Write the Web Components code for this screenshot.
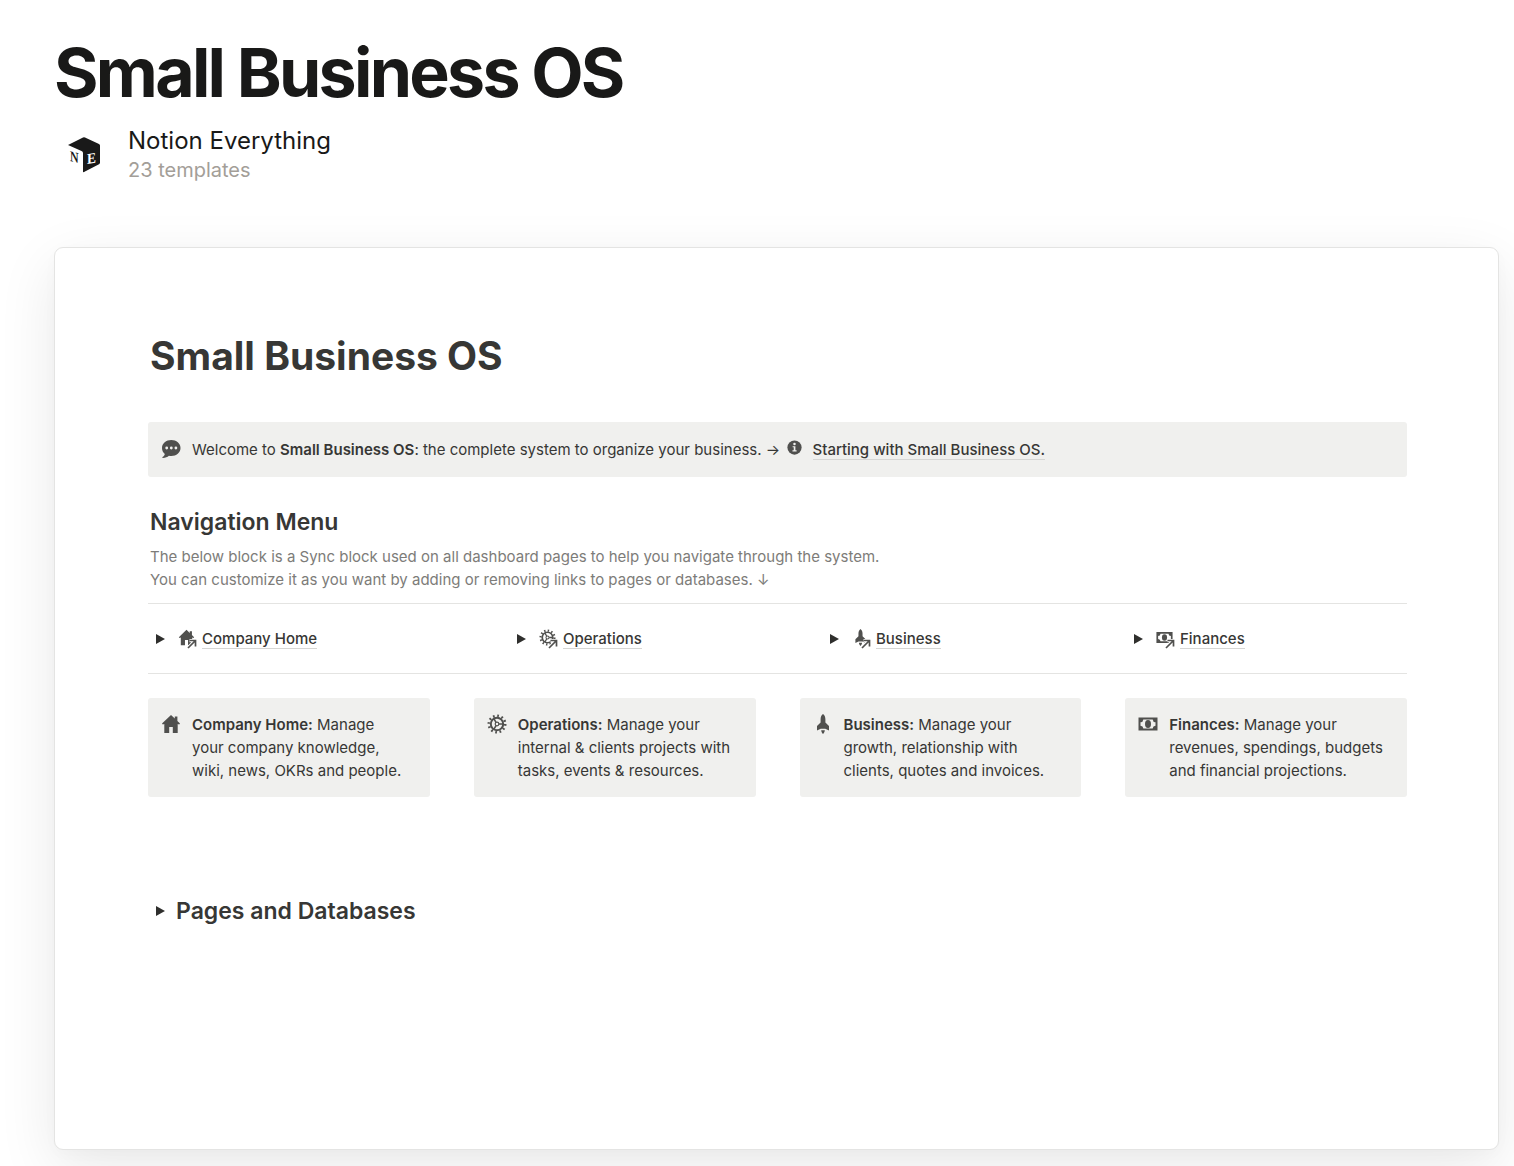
<!DOCTYPE html>
<html lang="en">
<head>
<meta charset="utf-8">
<meta name="viewport" content="width=device-width, initial-scale=1">
<title>Small Business OS</title>
<style>
  body { margin: 0; background: #fff; color: #373735; font: 15px/23px Inter, "Liberation Sans", sans-serif; }
</style>
</head>
<body>
<template-page></template-page>
<script>
const icons = {
  home: '<path d="M10 1 1 9.600l.8 1L3.300 10v9h4.900v-6h3.600v6h4.900v-9l1.500.6.8-1-2.600-2.500V2.600h-2.600v2z"/>',
  gear: '<g fill="none" stroke="currentColor"><circle cx="10" cy="10" r="6.200" stroke-width="2"/><circle cx="10" cy="10" r="8.200" stroke-width="2.600" stroke-dasharray="1.700 2.593"/><circle cx="10" cy="10" r="1.800" stroke-width="1.200"/><path stroke-width="1.500" d="M12 10h4.300M9 8.300 6.800 4.500M9 11.700l-2.200 3.800"/></g>',
  rocket: '<path d="M10 0C8.300 1.200 7.600 3.200 7.600 5.400v3L4 12v4.600l3.700-1.900h4.600l3.700 1.900V12l-3.600-3.600v-3C12.400 3.200 11.700 1.200 10 0zM8.200 16.200h3.600c0 1.500-.8 2.800-1.800 3.800-1-1-1.800-2.300-1.800-3.800z"/>',
  money: '<path fill-rule="evenodd" d="M.5 3.500h19v13H.5zM5.300 5.500A3 3 0 0 1 2.500 8.300v3.400a3 3 0 0 1 2.800 2.800h9.400a3 3 0 0 1 2.800-2.800V8.300a3 3 0 0 1-2.800-2.800z"/><ellipse cx="10" cy="10" rx="3" ry="3.900"/>',
  chat: '<path fill-rule="evenodd" d="M10.300 1C5.200 1 1 4.400 1 8.900c0 2.500 1.100 4.600 2.800 6-.3 1.300-1 2.300-2.300 3.100-.4.400-.2.900.4.900 2.500 0 4.500-.8 6-2.200.8.200 1.600.2 2.400.2 5.100 0 9.200-3.400 9.200-8S15.400 1 10.300 1zM5.700 7.600a1.400 1.400 0 1 1 0 2.800 1.400 1.400 0 0 1 0-2.800zm4.600 0a1.400 1.400 0 1 1 0 2.800 1.400 1.400 0 0 1 0-2.800zm4.600 0a1.400 1.400 0 1 1 0 2.800 1.400 1.400 0 0 1 0-2.800z"/>',
  info: '<circle cx="10" cy="10" r="9.500"/><g fill="#f0f0ee"><circle cx="10" cy="5.200" r="1.700"/><path d="M7.500 8.200h3.700v5.600h1.600v1.600H7.300v-1.600h1.700v-4H7.500z"/></g>',
  arrow: '<g fill="none"><path stroke="#fff" stroke-width="7" d="M2 18 17 3M5 3h12v12"/><path stroke="currentColor" stroke-width="3.400" d="M2 18 17 3M5 3h12v12"/></g>'
};
const define = (name, markup) => customElements.define(name, class extends HTMLElement {
  constructor() {
    super();
    this.attachShadow({ mode: 'open' }).innerHTML = typeof markup === 'function' ? markup(this) : markup;
  }
});

customElements.define('ui-icon', class extends HTMLElement {
  connectedCallback() {
    if (!this.shadowRoot) this.attachShadow({ mode: 'open' });
    this.shadowRoot.innerHTML = `<style>
      :host { display: inline-block; flex: none; width: 20px; height: 20px; color: #50504e; }
      svg { display: block; width: 100%; height: 100%; fill: currentColor; }
    </style><svg viewBox="0 0 20 20" aria-hidden="true">${icons[this.getAttribute('name')]}</svg>`;
  }
});

define('creator-line', `<style>
  :host { display: flex; align-items: center; gap: 27px; padding-left: 13px; }
  svg { flex: none; width: 34px; height: 36px; }
  a, span { display: block; }
  a { color: #191918; font-size: 24px; line-height: 30px; text-decoration: none; }
  span { color: #a39e98; font-size: 20px; line-height: 28px; }
  text { font: bold 15px "Liberation Serif", serif; }
</style>
<svg viewBox="0 0 34 36" aria-hidden="true">
  <path fill="#191919" d="M1 8 16 .5q1-.6 2 0L32 7q1 .5 1 1.500v17q0 1.200-1 1.800L17 35l-1 .2V16q0-1.500-1.500-2z"/>
  <text transform="matrix(.8 .2 0 1 3 24)" fill="#191919">N</text>
  <text transform="matrix(.9 -.15 0 1 20 27)" fill="#fff">E</text>
</svg>
<div><a href="#creator">Notion Everything</a><span>23 templates</span></div>`);

define('call-out', `<style>
  :host { display: flex; gap: 11px; padding: 15px 22px 15px 13px; background: #f0f0ee; border-radius: 3px; }
  div { flex: 1; min-width: 0; }
  ::slotted(ui-icon[slot]) { margin-top: 1px; }
</style><slot name="icon"></slot><div><slot></slot></div>`);

define('toggle-button', `<style>
  :host { display: inline-flex; flex: none; }
  button { display: flex; align-items: center; width: 26px; height: 23px; padding: 0 8px; border: 0; background: none; color: #2f2f2d; }
  svg { width: 9px; height: 10px; fill: currentColor; }
</style><button type="button" aria-label="Toggle" aria-expanded="false"><svg viewBox="0 0 9 10"><path d="M0 0 9 5 0 10z"/></svg></button>`);

define('page-link', `<style>
  :host { display: inline; font-weight: 500; }
  a { color: inherit; text-decoration: none; border-bottom: 1px solid #d6d6d4; }
</style><a href="#page"><slot></slot></a>`);

define('nav-item', el => `<style>
  :host { display: flex; align-items: center; }
  .pic { position: relative; display: block; width: 20px; height: 20px; margin: 0 4px; }
  .pic ui-icon { display: block; width: 17px; height: 17px; }
  .pic .go { position: absolute; right: 1px; bottom: 0; width: 10px; height: 10px; }
</style><toggle-button></toggle-button>
<span class="pic"><ui-icon name="${el.getAttribute('icon')}"></ui-icon><ui-icon class="go" name="arrow"></ui-icon></span>
<page-link><slot></slot></page-link>`);

define('workspace-preview', `<style>
  :host { display: block; padding: 82px 91px 222px 93px; border: 1px solid #e4e4e3; border-radius: 9px; background: #fff;
    box-shadow: 0 18px 60px rgba(0,0,0,.09), 0 4px 16px rgba(0,0,0,.02); }
  h2 { margin: 0 0 41px 2px; font-size: 39px; line-height: 51px; font-weight: 700; }
  h3 { margin: 0; font-size: 23px; line-height: 32px; font-weight: 600; }
  .menu { margin: 29px 2px 12px; }
  .menu p { margin: 7px 0 0; color: #7d7c79; }
  .welcome { padding-block: 16px; }
  .welcome ui-icon[name="info"] { width: 15px; height: 15px; margin: 0 6px 0 3px; }
  nav { display: grid; grid-template-columns: 317fr 269fr 260fr 281fr; gap: 44px; padding: 23px 0; border: solid #e4e4e2; border-width: 1px 0; }
  .cards { display: grid; grid-template-columns: repeat(4, 1fr); gap: 44px; margin-top: 24px; }
  .databases { display: flex; align-items: center; gap: 2px; margin-top: 98px; }
  b { font-weight: 600; }
</style>
<h2>Small Business OS</h2>
<call-out class="welcome"><ui-icon slot="icon" name="chat"></ui-icon>Welcome to <b>Small Business OS</b>: the complete system to organize your business. → <ui-icon name="info"></ui-icon> <page-link>Starting with Small Business OS.</page-link></call-out>
<section class="menu">
  <h3>Navigation Menu</h3>
  <p>The below block is a Sync block used on all dashboard pages to help you navigate through the system.<br>You can customize it as you want by adding or removing links to pages or databases. ↓</p>
</section>
<nav>
  <nav-item icon="home">Company Home</nav-item>
  <nav-item icon="gear">Operations</nav-item>
  <nav-item icon="rocket">Business</nav-item>
  <nav-item icon="money">Finances</nav-item>
</nav>
<div class="cards">
  <call-out><ui-icon slot="icon" name="home"></ui-icon><b>Company Home:</b> Manage your company knowledge, wiki, news, OKRs and people.</call-out>
  <call-out><ui-icon slot="icon" name="gear"></ui-icon><b>Operations:</b> Manage your internal &amp; clients projects with tasks, events &amp; resources.</call-out>
  <call-out><ui-icon slot="icon" name="rocket"></ui-icon><b>Business:</b> Manage your growth, relationship with clients, quotes and invoices.</call-out>
  <call-out><ui-icon slot="icon" name="money"></ui-icon><b>Finances:</b> Manage your revenues, spendings, budgets and financial projections.</call-out>
</div>
<div class="databases"><toggle-button></toggle-button><h3>Pages and Databases</h3></div>`);

define('template-page', `<style>
  :host { display: block; padding: 30px 15px 16px 54px; }
  h1 { margin: 0; color: #191918; font-size: 68px; line-height: 84px; font-weight: 700; letter-spacing: -0.04em; }
  creator-line { margin: 12px 0 63px; }
</style>
<h1>Small Business OS</h1>
<creator-line></creator-line>
<workspace-preview></workspace-preview>`);
</script>
</body>
</html>
